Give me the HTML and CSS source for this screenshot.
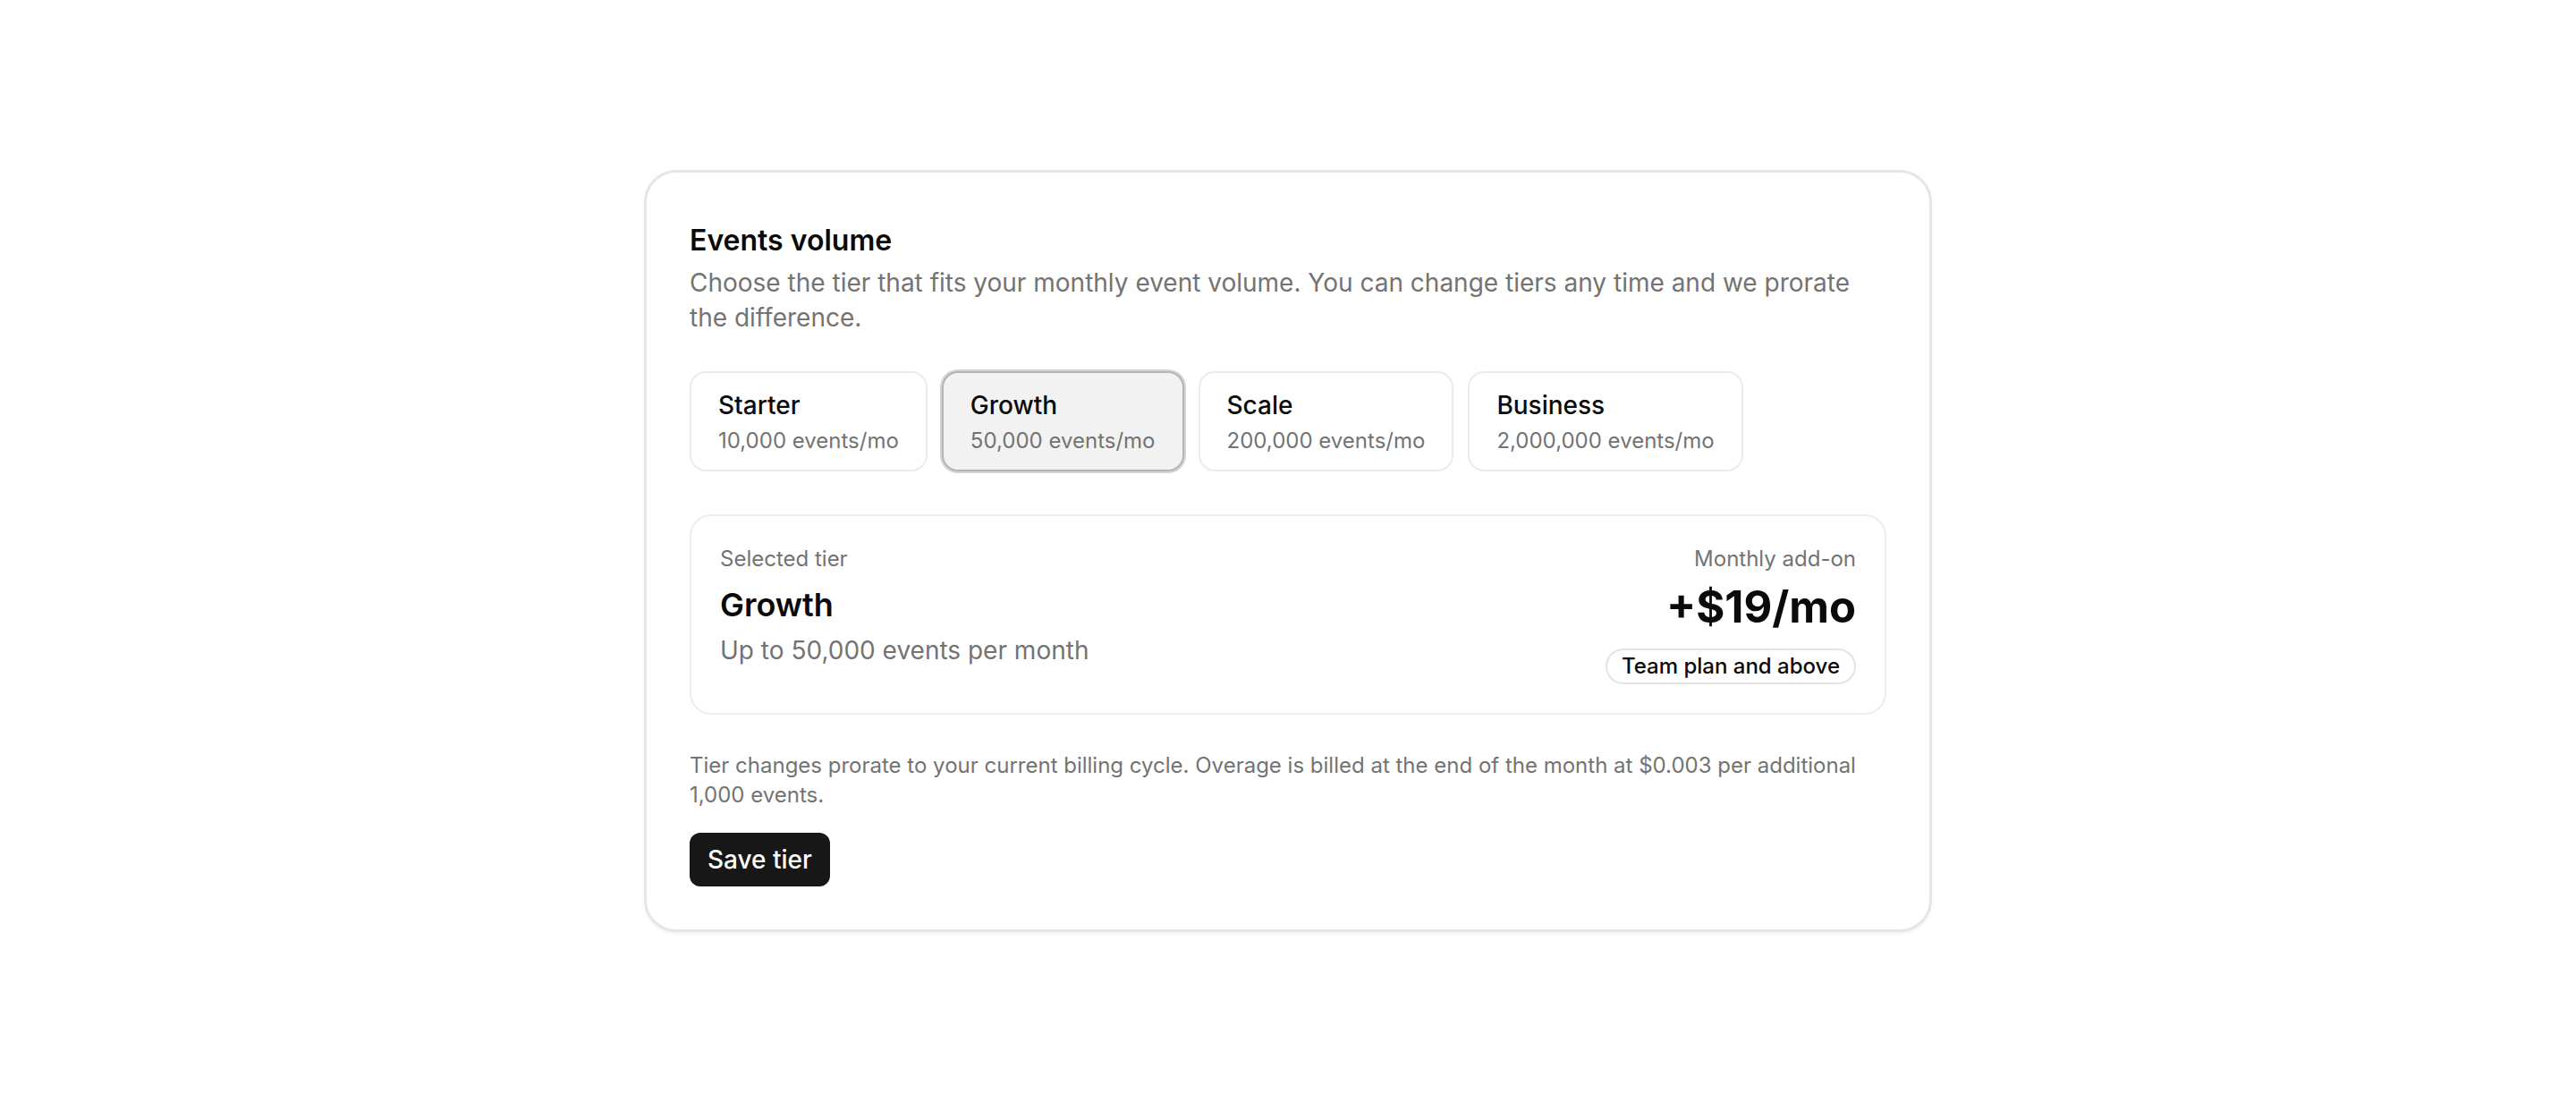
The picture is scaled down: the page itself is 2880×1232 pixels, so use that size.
FILE: index.html
```html
<!DOCTYPE html>
<html lang="en">
<head>
  <meta charset="UTF-8">
  <meta name="viewport" content="width=device-width, initial-scale=1.0">
  <title>Events volume</title>
  <link rel="stylesheet" href="styles.css">
</head>
<body>

  <main class="page">
    <section class="tier-card">
      <h2 class="tier-card-title">Events volume</h2>
      <p class="tier-card-desc">Choose the tier that fits your monthly event volume. You can change tiers any time and we prorate the difference.</p>

      <div class="tier-options">
        <button class="tier-option" data-tier="starter">
          <span class="tier-name">Starter</span>
          <span class="tier-volume">10,000 events/mo</span>
        </button>
        <button class="tier-option is-selected" data-tier="growth">
          <span class="tier-name">Growth</span>
          <span class="tier-volume">50,000 events/mo</span>
        </button>
        <button class="tier-option" data-tier="scale">
          <span class="tier-name">Scale</span>
          <span class="tier-volume">200,000 events/mo</span>
        </button>
        <button class="tier-option" data-tier="business">
          <span class="tier-name">Business</span>
          <span class="tier-volume">2,000,000 events/mo</span>
        </button>
      </div>

      <div class="summary">
        <div class="summary-col">
          <div class="summary-label">Selected tier</div>
          <div class="summary-name">Growth</div>
          <div class="summary-detail">Up to 50,000 events per month</div>
        </div>
        <div class="summary-col summary-col-right">
          <div class="summary-label">Monthly add-on</div>
          <div class="summary-price">+$19/mo</div>
          <span class="pill">Team plan and above</span>
        </div>
      </div>

      <p class="note">Tier changes prorate to your current billing cycle. Overage is billed at the end of the month at $0.003 per additional 1,000 events.</p>

      <button class="save-button">Save tier</button>
    </section>
  </main>

</body>
</html>
```

FILE: styles.css
```css
* {
  margin: 0;
  padding: 0;
  box-sizing: border-box;
}

html {
  background: #fff;
}

body {
  font-family: "Inter", "Liberation Sans", sans-serif;
  color: #0a0a0a;
}

.page {
  min-height: 100vh;
  display: flex;
  align-items: center;
  justify-content: center;
}

.tier-card {
  width: 1440px;
  padding: 52px 48px 48px;
  border: 3px solid #e6e6e6;
  border-radius: 36px;
  background: #fff;
  box-shadow: 0 2px 4px rgba(0, 0, 0, 0.05);
}

.tier-card-title {
  font-size: 32px;
  font-weight: 600;
  line-height: 48px;
}

.tier-card-desc {
  margin-top: 4px;
  font-size: 28px;
  line-height: 1.4;
  color: #737373;
}

.tier-options {
  display: flex;
  gap: 16px;
  margin-top: 40px;
}

.tier-option {
  display: flex;
  flex-direction: column;
  align-items: flex-start;
  gap: 4px;
  padding: 16px 30px;
  border: 2px solid #ebebeb;
  border-radius: 18px;
  background: #fff;
  font-family: inherit;
  text-align: left;
  cursor: pointer;
}

.tier-option.is-selected {
  background: #f2f2f2;
  border-color: #b5b5b5;
  box-shadow: 0 0 0 2px #d4d4d4;
}

.tier-name {
  font-size: 28px;
  font-weight: 500;
  line-height: 40px;
  color: #0a0a0a;
}

.tier-volume {
  font-size: 24px;
  line-height: 32px;
  color: #737373;
}

.summary {
  display: flex;
  justify-content: space-between;
  align-items: flex-start;
  margin-top: 48px;
  padding: 32px;
  border: 2px solid #ededed;
  border-radius: 24px;
}

.summary-col {
  display: flex;
  flex-direction: column;
  align-items: flex-start;
}

.summary-col-right {
  align-items: flex-end;
  text-align: right;
}

.summary-label {
  font-size: 24px;
  line-height: 32px;
  color: #737373;
}

.summary-name {
  margin-top: 8px;
  font-size: 36px;
  font-weight: 600;
  line-height: 54px;
}

.summary-detail {
  margin-top: 4px;
  font-size: 28px;
  line-height: 40px;
  color: #737373;
}

.summary-price {
  margin-top: 8px;
  font-size: 49px;
  font-weight: 700;
  line-height: 60px;
}

.pill {
  margin-top: 16px;
  padding: 2px 16px;
  border: 2px solid #e3e3e3;
  border-radius: 999px;
  font-size: 24px;
  font-weight: 500;
  line-height: 32px;
  color: #0a0a0a;
}

.note {
  margin-top: 40px;
  font-size: 24px;
  line-height: 33px;
  color: #737373;
}

.save-button {
  margin-top: 26px;
  height: 60px;
  padding: 0 20px;
  border: none;
  border-radius: 12px;
  background: #171717;
  color: #fff;
  font-family: inherit;
  font-size: 28px;
  font-weight: 500;
  cursor: pointer;
}
```
